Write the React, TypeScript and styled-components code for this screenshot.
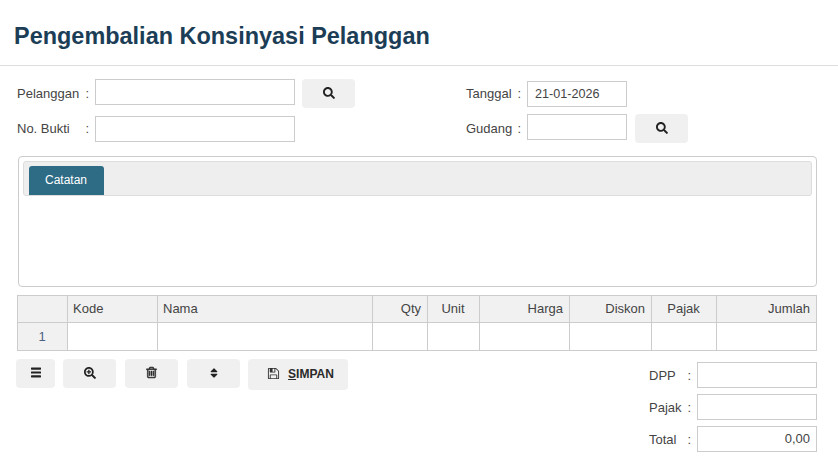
import styled, { createGlobalStyle } from 'styled-components';
import { FaSearch, FaSearchPlus, FaSort } from 'react-icons/fa';

const GlobalStyle = createGlobalStyle`
    html, body {
        margin: 0;
        background: #fff;
        font-family: "Liberation Sans", Arial, sans-serif;
        font-size: 13px;
        color: #444;
    }
    * { box-sizing: border-box; }
`;

const Page = styled.div`
    width: 838px;
    height: 473px;
    overflow: hidden;
`;

const Header = styled.div`
    height: 66px;
    padding: 21px 14px 0;
    border-bottom: 1px solid #ddd;
`;

const Title = styled.h1`
    margin: 0;
    font-size: 23.46px;
    line-height: 30px;
    font-weight: bold;
    color: #1b3d56;
`;

const Form = styled.div`
    display: flex;
    height: 90px;
    padding: 13px 0 0 17px;
`;

const FormColumn = styled.div<{ $width: number; $gap: number; $top?: number }>`
    display: flex;
    flex-direction: column;
    width: ${p => p.$width}px;
    gap: ${p => p.$gap}px;
    padding-top: ${p => p.$top || 0}px;
`;

const Row = styled.div`
    display: flex;
    align-items: flex-start;
    height: 26px;
`;

const Label = styled.label<{ $width: number; $line?: number }>`
    display: flex;
    justify-content: space-between;
    width: ${p => p.$width}px;
    padding-right: 6px;
    line-height: ${p => p.$line || 28}px;
    flex-shrink: 0;
    white-space: pre;
`;

const Input = styled.input<{ $width: number }>`
    width: ${p => p.$width}px;
    height: 26px;
    padding: 0 7px 1px;
    border: 1px solid #ccc;
    border-radius: 0;
    outline: none;
    background: #fff;
    font-family: inherit;
    font-size: 12.6px;
    color: #444;
`;

const AmountInput = styled(Input)`
    padding-right: 6px;
    font-size: 13px;
    text-align: right;
`;

const Button = styled.button<{ $width: number; $height?: number; $left?: number }>`
    display: inline-flex;
    align-items: center;
    justify-content: center;
    width: ${p => p.$width}px;
    height: ${p => p.$height || 29}px;
    margin-left: ${p => p.$left || 0}px;
    padding: 0 0 2px;
    border: 0;
    border-radius: 4px;
    background: #f0f0f0;
    color: #222;
    font: inherit;
    font-size: 12px;
    flex-shrink: 0;
`;

const SaveButton = styled(Button)`
    padding-left: 5px;
    color: #333;
`;

const Panel = styled.div`
    width: 799px;
    height: 131px;
    margin: 0 0 8px 18px;
    padding: 4px;
    border: 1px solid #ccc;
    border-radius: 4px;
`;

const TabBar = styled.div`
    display: flex;
    align-items: flex-end;
    height: 35px;
    padding-left: 5px;
    background: #eee;
    border: 1px solid #ddd;
    border-radius: 3px;
`;

const Tab = styled.div`
    width: 75px;
    height: 29px;
    padding: 7px 1px 0 0;
    text-align: center;
    font-size: 12px;
    color: #fff;
    background: #2e6c86;
    border-radius: 3px 3px 0 0;
`;

const Table = styled.table`
    width: 799px;
    margin-left: 17px;
    border-collapse: collapse;
    table-layout: fixed;
`;

const HeadCell = styled.th<{ $align?: string }>`
    height: 27px;
    padding: 0 6px 1px 5px;
    border: 1px solid #ccc;
    background: #f1f1f1;
    font-weight: normal;
    text-align: ${p => p.$align || 'left'};
`;

const Cell = styled.td<{ $index?: boolean }>`
    height: 28px;
    padding: ${p => (p.$index ? '0 1px 0 0' : '0')};
    border: 1px solid #ccc;
    text-align: center;
    background: ${p => (p.$index ? '#f1f1f1' : '#fff')};
    color: #4d6180;
`;

const Bottom = styled.div`
    display: flex;
    justify-content: space-between;
    padding: 8px 21px 0 16px;
`;

const Toolbar = styled.div`
    display: flex;
    align-items: flex-start;
    gap: 8px;
`;

const SaveText = styled.span`
    margin-left: 8px;
    font-weight: bold;
    color: #2a2a2a;
`;

const Summary = styled.div`
    display: flex;
    flex-direction: column;
    gap: 6px;
    padding-top: 3px;
`;

const MenuIcon = () => (
    <svg width="10" height="11" viewBox="0 0 10 11" fill="currentColor">
        <rect y="0.5" width="10" height="2.2" rx="0.4" />
        <rect y="4.4" width="10" height="2.2" rx="0.4" />
        <rect y="8.3" width="10" height="2.2" rx="0.4" />
    </svg>
);

const TrashIcon = () => (
    <svg width="13" height="13" viewBox="0 0 1792 1792" fill="currentColor" stroke="currentColor" strokeWidth="60">
        <path d="M704 736v576q0 14-9 23t-23 9h-64q-14 0-23-9t-9-23v-576q0-14 9-23t23-9h64q14 0 23 9t9 23zm256 0v576q0 14-9 23t-23 9h-64q-14 0-23-9t-9-23v-576q0-14 9-23t23-9h64q14 0 23 9t9 23zm256 0v576q0 14-9 23t-23 9h-64q-14 0-23-9t-9-23v-576q0-14 9-23t23-9h64q14 0 23 9t9 23zm128 724v-948h-896v948q0 22 7 40.5t14.5 27 10.5 8.500h832q3 0 10.500-8.500t14.500-27 7-40.500zm-672-1076h448l-48-117q-7-9-17-11h-317q-10 2-17 11zm928 32v64q0 14-9 23t-23 9h-96v948q0 83-47 143.500t-113 60.500h-832q-66 0-113-58.500t-47-141.500v-952h-96q-14 0-23-9t-9-23v-64q0-14 9-23t23-9h309l70-167q15-37 54-63t79-26h320q40 0 79 26t54 63l70 167h309q14 0 23 9t9 23z" />
    </svg>
);

const SaveIcon = () => (
    <svg width="13" height="13" viewBox="0 0 1792 1792" fill="currentColor">
        <path d="M512 1536h768v-384h-768v384zm896 0h128v-896q0-14-10-38.500t-20-34.500l-281-281q-10-10-34-20t-39-10v416q0 40-28 68t-68 28h-576q-40 0-68-28t-28-68v-416h-128v1280h128v-416q0-40 28-68t68-28h832q40 0 68 28t28 68v416zm-384-928v-320q0-13-9.500-22.500t-22.500-9.500h-192q-13 0-22.500 9.500t-9.500 22.500v320q0 13 9.500 22.500t22.500 9.500h192q13 0 22.500-9.500t9.500-22.500zm640 32v928q0 40-28 68t-68 28h-1344q-40 0-68-28t-28-68v-1344q0-40 28-68t68-28h928q40 0 88 20t76 48l280 280q28 28 48 76t20 88z" />
    </svg>
);

const columns = [
    { width: 50, title: '' },
    { width: 90, title: 'Kode' },
    { width: 215, title: 'Nama' },
    { width: 55, title: 'Qty', align: 'right' },
    { width: 52, title: 'Unit', align: 'center' },
    { width: 90, title: 'Harga', align: 'right' },
    { width: 82, title: 'Diskon', align: 'right' },
    { width: 65, title: 'Pajak', align: 'center' },
    { width: 100, title: 'Jumlah', align: 'right' },
];

function App() {
    return (
        <Page>
            <GlobalStyle />
            <Header>
                <Title>Pengembalian Konsinyasi Pelanggan</Title>
            </Header>

            <Form>
                <FormColumn $width={449} $gap={11}>
                    <Row>
                        <Label $width={78} $line={30}>Pelanggan<span>:</span></Label>
                        <Input $width={200} />
                        <Button $width={53} $left={7}><FaSearch size={12} /></Button>
                    </Row>
                    <Row>
                        <Label $width={78} $line={26}>No. Bukti<span>:</span></Label>
                        <Input $width={200} />
                    </Row>
                </FormColumn>
                <FormColumn $width={240} $gap={7} $top={2}>
                    <Row>
                        <Label $width={61} $line={26}>Tanggal<span>:</span></Label>
                        <Input $width={100} defaultValue="21-01-2026" />
                    </Row>
                    <Row>
                        <Label $width={61} $line={30}>Gudang<span>:</span></Label>
                        <Input $width={100} />
                        <Button $width={53} $left={8}><FaSearch size={12} /></Button>
                    </Row>
                </FormColumn>
            </Form>

            <Panel>
                <TabBar>
                    <Tab>Catatan</Tab>
                </TabBar>
            </Panel>

            <Table>
                <colgroup>
                    {columns.map((c, i) => <col key={i} width={c.width} />)}
                </colgroup>
                <thead>
                    <tr>
                        {columns.map((c, i) => <HeadCell key={i} $align={c.align}>{c.title}</HeadCell>)}
                    </tr>
                </thead>
                <tbody>
                    <tr>
                        {columns.map((c, i) => <Cell key={i} $index={i === 0}>{i === 0 ? '1' : ''}</Cell>)}
                    </tr>
                </tbody>
            </Table>

            <Bottom>
                <Toolbar>
                    <Button $width={39}><MenuIcon /></Button>
                    <Button $width={53}><FaSearchPlus size={12} /></Button>
                    <Button $width={53} $left={1}><TrashIcon /></Button>
                    <Button $width={53} $left={1}><FaSort size={12} /></Button>
                    <SaveButton $width={100} $height={31}>
                        <SaveIcon />
                        <SaveText><u>S</u>IMPAN</SaveText>
                    </SaveButton>
                </Toolbar>
                <Summary>
                    <Row>
                        <Label $width={48}>DPP<span>:</span></Label>
                        <Input $width={120} />
                    </Row>
                    <Row>
                        <Label $width={48}>Pajak<span>:</span></Label>
                        <Input $width={120} />
                    </Row>
                    <Row>
                        <Label $width={48}>Total<span>:</span></Label>
                        <AmountInput $width={120} defaultValue="0,00" />
                    </Row>
                </Summary>
            </Bottom>
        </Page>
    );
}

export default App;
